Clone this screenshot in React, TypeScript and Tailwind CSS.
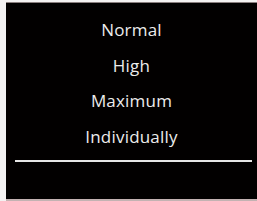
export default function App() {
  const items = ["Normal", "High", "Maximum", "Individually"];
  return (
    <div className="w-[257px] h-[201px] bg-[#f4f2f2] flex flex-col">
      <div className="ml-[6px] mt-[2px] flex-1 bg-[#020000] border-t border-[#8a7f7f] border-b-2 border-b-[#c3b2b2] flex flex-col">
        <div
          className="flex flex-col items-center pt-[9px] text-[#ececec] text-[17px] leading-[35.5px] tracking-[0.2px]"
          style={{ fontFamily: '"Open Sans", "Noto Sans", sans-serif' }}
        >
          {items.map((t) => (
            <div key={t}>{t}</div>
          ))}
        </div>
        <div className="mt-[6px] ml-[9px] mr-[5px] h-[2px] bg-[#e6e6e6]" />
      </div>
    </div>
  );
}
